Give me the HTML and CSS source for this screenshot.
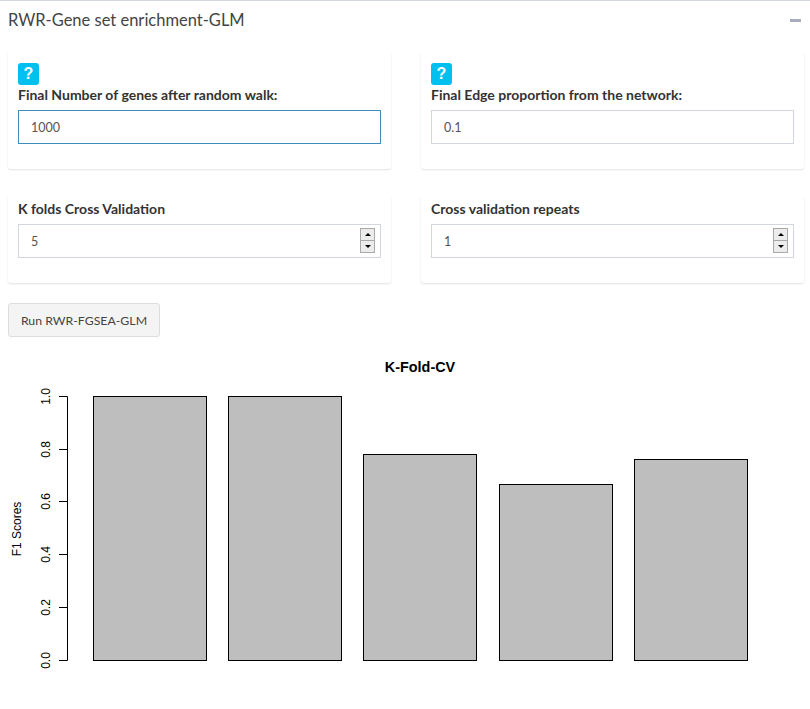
FILE: index.html
```html
<!DOCTYPE html>
<html>

<head>
<meta charset="UTF-8"/>
<title>RWR-Gene set enrichment-GLM</title>
<link rel="stylesheet" href="styles.css">
</head>

<body>
<div class="box">
    <div class="box-header">
        <h3 class="box-title">RWR-Gene set enrichment-GLM</h3>
        <span class="collapse-btn"></span>
    </div>
    <div class="box-body">
        <div class="well-grid">
            <div class="well">
                <span class="help-btn">?</span>
                <label class="field-label">Final Number of genes after random walk:</label>
                <input class="field-input is-focused" type="text" value="1000">
            </div>
            <div class="well">
                <span class="help-btn">?</span>
                <label class="field-label">Final Edge proportion from the network:</label>
                <input class="field-input" type="text" value="0.1">
            </div>
            <div class="well">
                <label class="field-label">K folds Cross Validation</label>
                <div class="number-wrap">
                    <input class="field-input" type="text" value="5">
                    <span class="spinner"><i class="spin-up"></i><i class="spin-down"></i></span>
                </div>
            </div>
            <div class="well">
                <label class="field-label">Cross validation repeats</label>
                <div class="number-wrap">
                    <input class="field-input" type="text" value="1">
                    <span class="spinner"><i class="spin-up"></i><i class="spin-down"></i></span>
                </div>
            </div>
        </div>
        <button class="run-btn">Run RWR-FGSEA-GLM</button>
    </div>
    <svg class="plot" width="810" height="359" viewBox="0 0 810 359">
        <text class="plot-title" x="420" y="22" text-anchor="middle">K-Fold-CV</text>
        <g class="axis">
            <path d="M67.5 46.5V310.5M59 46.5H67.5M59 99.5H67.5M59 151.5H67.5M59 204.5H67.5M59 257.5H67.5M59 310.5H67.5"/>
        </g>
        <g class="tick-labels">
            <text transform="translate(50 310.5) rotate(-90)" text-anchor="middle">0.0</text>
            <text transform="translate(50 257.5) rotate(-90)" text-anchor="middle">0.2</text>
            <text transform="translate(50 204.5) rotate(-90)" text-anchor="middle">0.4</text>
            <text transform="translate(50 151.5) rotate(-90)" text-anchor="middle">0.6</text>
            <text transform="translate(50 99.5) rotate(-90)" text-anchor="middle">0.8</text>
            <text transform="translate(50 46.5) rotate(-90)" text-anchor="middle">1.0</text>
            <text transform="translate(21 179) rotate(-90)" text-anchor="middle">F1 Scores</text>
        </g>
        <g class="bars">
            <rect x="93.5" y="46.5" width="113" height="264"/>
            <rect x="228.5" y="46.5" width="113" height="264"/>
            <rect x="363.5" y="104.5" width="113" height="206"/>
            <rect x="499.5" y="134.5" width="113" height="176"/>
            <rect x="634.5" y="109.5" width="113" height="201"/>
        </g>
    </svg>
</div>
</body>

</html>
```

FILE: styles.css
```css
html, body {
    margin: 0;
    background: #fff;
}
body {
    font-family: Lato, "Noto Sans", Arial, sans-serif;
    color: #333;
}
.box {
    border-top: 1px solid #d2d6de;
}
.box-header {
    display: flex;
    justify-content: space-between;
    align-items: center;
    height: 39px;
    padding: 0 8px;
}
.box-title {
    margin: 0 0 2px;
    font-size: 16.5px;
    font-weight: 400;
    color: #444;
}
.collapse-btn {
    width: 11px;
    height: 3px;
    margin-right: 1px;
    background: #a6adbd;
}
.box-body {
    padding: 11px 6px 0 8px;
}
.well-grid {
    display: grid;
    grid-template-columns: 383px 383px;
    column-gap: 30px;
    row-gap: 26px;
}
.well {
    display: flex;
    flex-direction: column;
    align-items: flex-start;
    padding: 4px 10px 25px;
    border-radius: 3px;
    box-shadow: 0 1px 2px rgba(0, 0, 0, .12);
}
.help-btn {
    width: 21px;
    height: 22px;
    margin-top: 8px;
    border-radius: 3px;
    background: #00c0ef;
    color: #fff;
    font: bold 16px/22px "Liberation Sans", Arial, sans-serif;
    text-align: center;
}
.field-label {
    margin: 0 0 5px;
    font-size: 14px;
    font-weight: 700;
    line-height: 20px;
}
.field-input {
    box-sizing: border-box;
    width: 100%;
    height: 34px;
    padding: 6px 12px;
    border: 1px solid #d2d6de;
    border-radius: 0;
    outline: none;
    font: 12.5px Lato, sans-serif;
    color: #555;
}
.is-focused {
    border-color: #3c8dbc;
}
.number-wrap {
    position: relative;
    width: 100%;
}
.number-wrap .field-input {
    display: block;
}
.spinner {
    position: absolute;
    top: 4px;
    right: 6px;
    display: flex;
    flex-direction: column;
    box-sizing: border-box;
    width: 15px;
    height: 25px;
    border: 1px solid #a9a9a9;
    background: #a9a9a9;
    gap: 1px;
}
.spinner i {
    flex: 1;
    display: flex;
    align-items: center;
    justify-content: center;
    background: #ececec;
}
.spinner i::before {
    content: "";
    border-left: 3.5px solid transparent;
    border-right: 3.5px solid transparent;
}
.spin-up::before {
    border-bottom: 3px solid #000;
}
.spin-down::before {
    border-top: 3px solid #000;
}
.run-btn {
    display: block;
    width: 152px;
    height: 34px;
    margin-top: 20px;
    padding: 0;
    border: 1px solid #ddd;
    border-radius: 3px;
    background: #f4f4f4;
    font: 12.3px Lato, sans-serif;
    color: #444;
}
.plot {
    display: block;
    margin-top: 13px;
}
.plot-title {
    font: bold 14.4px "Liberation Sans", Arial, sans-serif;
    fill: #000;
}
.axis path {
    fill: none;
    stroke: #000;
    stroke-width: 1;
}
.tick-labels text {
    font: 12px "Liberation Sans", Arial, sans-serif;
    fill: #000;
}
.bars rect {
    fill: #bebebe;
    stroke: #000;
    stroke-width: 1;
}
```
